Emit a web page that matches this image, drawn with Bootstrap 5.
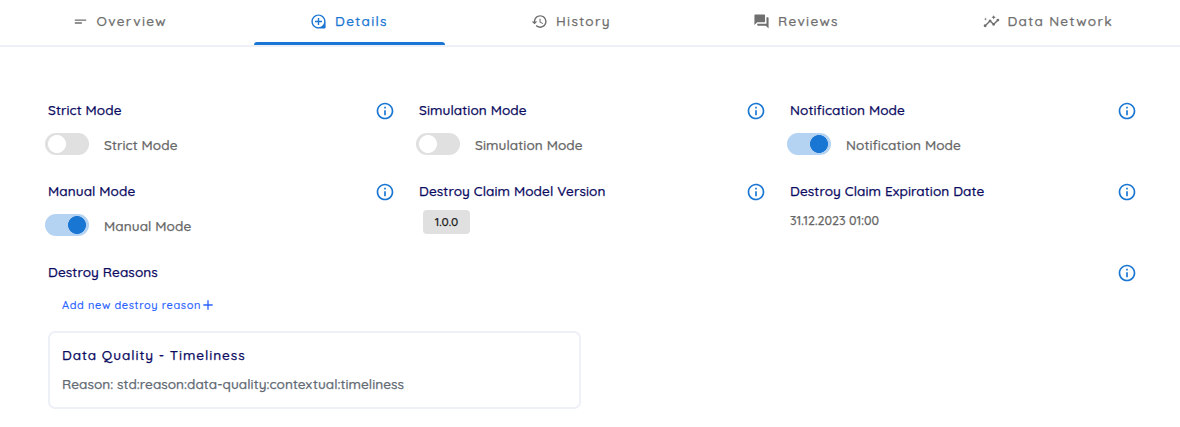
<!DOCTYPE html>
<html lang="en">
<head>
<meta charset="utf-8">
<meta name="viewport" content="width=device-width, initial-scale=1">
<title>Destroy Claim</title>
<link href="https://cdn.jsdelivr.net/npm/bootstrap@5.3.0/dist/css/bootstrap.min.css" rel="stylesheet">
<style>
body{font-family:Quicksand,Lato,sans-serif;font-size:13.6px;font-weight:500;line-height:20px;letter-spacing:.09px;color:#666;background:#fff;-webkit-text-stroke:.25px currentColor}
.claim-tabs{height:47px;border-bottom:2px solid #edf1f7;padding-left:17px;gap:30.5px;flex-wrap:nowrap}
.claim-tabs .nav-link{padding:11px 0 0 56.5px;height:45px;color:#6f6f6f;letter-spacing:1.3px;white-space:nowrap;flex:none;display:flex;align-items:flex-start}
.claim-tabs .nav-link.active{color:#1976d2;position:relative}
.claim-tabs .nav-link.active::after{content:"";position:absolute;left:0;right:0;bottom:0;height:3px;background:#1976d2;border-radius:3px 3px 0 0}
.claim-tabs svg{width:17px;height:17px;margin-top:2px;margin-right:8px;flex:none}
svg{fill:currentColor;-webkit-text-stroke:0;stroke:none}
.claim-tabs .t-over{width:206px;padding-left:54.5px}.t-det,.t-hist{width:191px}.claim-tabs .t-hist{padding-left:56px}.t-rev{width:199px}.t-net{width:243px}
.fields{margin:53px 0 0 48px;width:1088px;display:grid;grid-template-columns:346px 346px 346px;column-gap:25px;grid-auto-rows:81px}
.wide-field{margin-left:48px;width:1088px}
.heading{color:#0b0b61;height:22px}
.info{width:20px;height:20px;color:#1976d2;margin:1px -1px 0 0;flex:none}
.switch-row{margin:11px 0 0 -3px;height:22px}
.form-check-input.toggle{width:44px;height:22px;margin:0;border:0;background-color:#e0e0e0;background-image:radial-gradient(circle,#fff 8.6px,transparent 9.3px);background-size:24px 22px;background-position:0 0;background-repeat:no-repeat;border-radius:11px}
.form-check-input.toggle:checked{background-color:#b4d3f3;background-image:radial-gradient(circle,#1976d2 8.6px,transparent 9.3px);background-position:20px 0}
.switch-row label{margin:2px 0 0 15px}
.version{background:#e0e0e0;color:#222;width:47px;height:24px;border-radius:4px;font-size:12px;letter-spacing:-.08px;margin:7px 0 0 4px}
.date{font-size:12.5px;letter-spacing:0;margin-top:7px}
.add-link{font-size:11px;letter-spacing:.6px;color:#2962ff;margin:11px 0 0 14px;border:0;padding:0;background:none;font-weight:500;line-height:20px;-webkit-text-stroke:.15px currentColor}
.add-link svg{width:16px;height:16px;margin-left:-1px}
.reason-card{width:533px;height:78px;border:2px solid #edf1f7;border-radius:7px;margin:16px 0 0 48px;padding:12px}
.reason-card h6{font-size:13.6px;line-height:20px;color:#0b0b61;letter-spacing:.94px;margin:0 0 9px;font-weight:500}
.reason-card p{margin:0;letter-spacing:.045px;color:#626a74}
</style>
</head>
<body>
<nav class="nav claim-tabs">
<a class="nav-link t-over"><svg viewBox="0 0 24 24"><path d="M4 9h16v2H4zm0 4h10v2H4z"/></svg>Overview</a>
<a class="nav-link active t-det"><svg viewBox="0 0 24 24"><path d="M13 7h-2v4H7v2h4v4h2v-4h4v-2h-4V7zm-1-5C6.49 2 2 6.49 2 12s4.49 10 10 10h8c1.1 0 2-.9 2-2v-8c0-5.51-4.49-10-10-10zm0 18c-4.41 0-8-3.59-8-8s3.59-8 8-8 8 3.59 8 8-3.59 8-8 8z"/></svg>Details</a>
<a class="nav-link t-hist"><svg viewBox="0 0 24 24"><path d="M13 3c-4.97 0-9 4.03-9 9H1l3.89 3.89.07.14L9 12H6c0-3.87 3.13-7 7-7s7 3.13 7 7-3.13 7-7 7c-1.93 0-3.68-.79-4.94-2.06l-1.42 1.42C8.27 19.99 10.51 21 13 21c4.97 0 9-4.03 9-9s-4.03-9-9-9zm-1 5v5l4.28 2.54.72-1.21-3.5-2.08V8H12z"/></svg>History</a>
<a class="nav-link t-rev"><svg viewBox="0 0 24 24"><path d="M21 6h-2v9H6v2c0 .55.45 1 1 1h11l4 4V7c0-.55-.45-1-1-1zm-4 6V3c0-.55-.45-1-1-1H3c-.55 0-1 .45-1 1v14l4-4h10c.55 0 1-.45 1-1z"/></svg>Reviews</a>
<a class="nav-link t-net"><svg viewBox="0 0 24 24"><path d="M21 8c-1.45 0-2.26 1.44-1.93 2.51l-3.55 3.56c-.3-.09-.74-.09-1.04 0l-2.55-2.55C12.27 10.45 11.46 9 10 9c-1.45 0-2.27 1.44-1.93 2.52l-4.56 4.55C2.44 15.74 1 16.55 1 18c0 1.1.9 2 2 2 1.45 0 2.26-1.44 1.93-2.51l4.55-4.56c.3.09.74.09 1.04 0l2.55 2.55C12.73 16.55 13.54 18 15 18c1.45 0 2.27-1.44 1.93-2.52l3.56-3.55C21.56 12.26 23 11.45 23 10c0-1.1-.9-2-2-2zM15 9l.94-2.07L18 6l-2.06-.93L15 3l-.92 2.07L12 6l2.08.93zM3.5 11L4 9l2-.5L4 8l-.5-2L3 8l-2 .5L3 9z"/></svg>Data Network</a>
</nav>
<svg class="d-none"><symbol id="info" viewBox="0 0 24 24"><path d="M11 7h2v2h-2zm0 4h2v6h-2zm1-9C6.48 2 2 6.48 2 12s4.48 10 10 10 10-4.48 10-10S17.52 2 12 2zm0 18c-4.41 0-8-3.59-8-8s3.59-8 8-8 8 3.59 8 8-3.59 8-8 8z"/></symbol></svg>
<main>
<div class="fields">
<section><div class="heading d-flex justify-content-between"><span>Strict Mode</span><svg class="info"><use href="#info"/></svg></div><div class="switch-row d-flex"><input id="strict" class="form-check-input toggle" type="checkbox"><label for="strict">Strict Mode</label></div></section>
<section><div class="heading d-flex justify-content-between"><span>Simulation Mode</span><svg class="info"><use href="#info"/></svg></div><div class="switch-row d-flex"><input id="sim" class="form-check-input toggle" type="checkbox"><label for="sim">Simulation Mode</label></div></section>
<section><div class="heading d-flex justify-content-between"><span>Notification Mode</span><svg class="info"><use href="#info"/></svg></div><div class="switch-row d-flex"><input id="notif" class="form-check-input toggle" type="checkbox" checked><label for="notif">Notification Mode</label></div></section>
<section><div class="heading d-flex justify-content-between"><span>Manual Mode</span><svg class="info"><use href="#info"/></svg></div><div class="switch-row d-flex"><input id="manual" class="form-check-input toggle" type="checkbox" checked><label for="manual">Manual Mode</label></div></section>
<section><div class="heading d-flex justify-content-between"><span>Destroy Claim Model Version</span><svg class="info"><use href="#info"/></svg></div><div class="version d-flex align-items-center justify-content-center">1.0.0</div></section>
<section><div class="heading d-flex justify-content-between"><span>Destroy Claim Expiration Date</span><svg class="info"><use href="#info"/></svg></div><div class="date">31.12.2023 01:00</div></section>
</div>
<div class="wide-field"><div class="heading d-flex justify-content-between"><span>Destroy Reasons</span><svg class="info"><use href="#info"/></svg></div>
<button class="add-link d-flex align-items-center">Add new destroy reason<svg viewBox="0 0 24 24"><path d="M19 13h-6v6h-2v-6H5v-2h6V5h2v6h6z"/></svg></button></div>
<div class="reason-card"><h6>Data Quality - Timeliness</h6><p>Reason: std:reason:data-quality:contextual:timeliness</p></div>
</main>
<script src="https://cdn.jsdelivr.net/npm/bootstrap@5.3.0/dist/js/bootstrap.bundle.min.js"></script>
</body>
</html>
